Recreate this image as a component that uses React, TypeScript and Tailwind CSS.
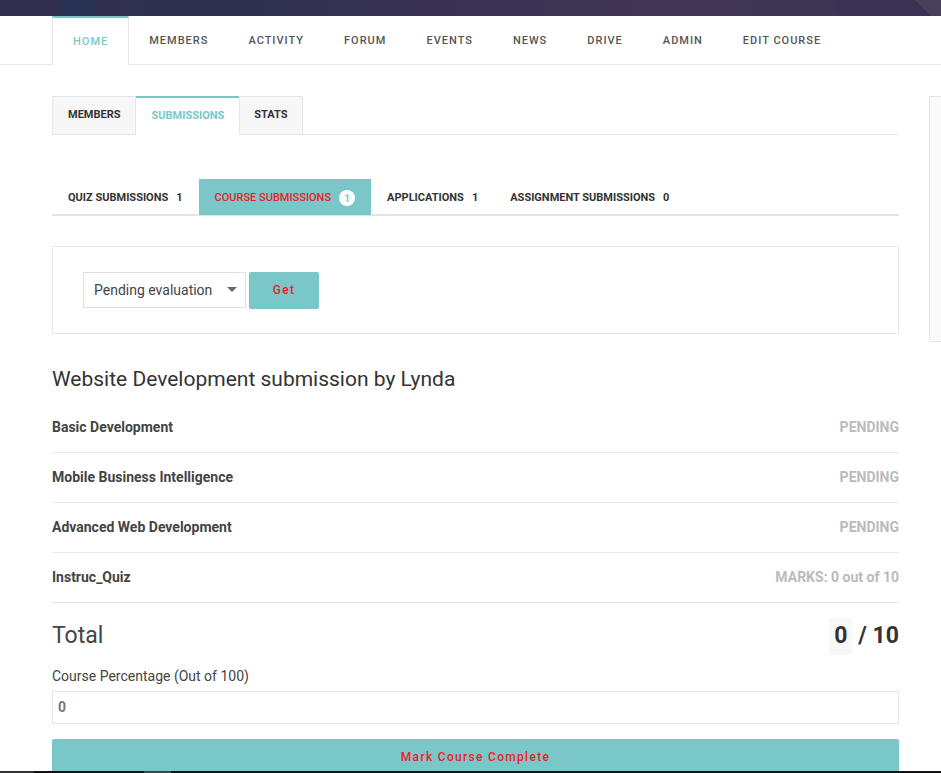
import React from "react";

function Row({ left, right }: { left: string; right: string }) {
  return (
    <div className="flex h-[50px] items-center justify-between border-b border-[#e8e8e8]">
      <span className="text-[14px] font-bold text-[#444]">{left}</span>
      <span className="text-[14px] font-bold text-[#bbbbbb]">{right}</span>
    </div>
  );
}

export default function App() {
  const nav = ["MEMBERS", "ACTIVITY", "FORUM", "EVENTS", "NEWS", "DRIVE", "ADMIN", "EDIT COURSE"];
  return (
    <div
      className="min-h-[773px] w-[941px] overflow-hidden bg-white"
      style={{ fontFamily: "Roboto, 'Noto Sans', sans-serif" }}
    >
      {/* dark header band */}
      <div className="relative h-[16px] overflow-hidden bg-[linear-gradient(90deg,#33304f_0%,#2f3151_25%,#383152_45%,#413554_70%,#3d3553_90%,#3e3654_100%)]">
        <div className="absolute left-[55px] top-0 h-[16px] w-[45px] bg-[#283456] opacity-80 [clip-path:polygon(0_0,100%_0,80%_100%,30%_100%)]" />
        <div className="absolute left-[830px] top-0 h-[16px] w-[111px] bg-[#3a3153] [clip-path:polygon(0_0,100%_0,100%_100%,10%_100%)]" />
        <div className="absolute left-[915px] top-0 h-[16px] w-[26px] bg-[#464159] [clip-path:polygon(0_0,100%_0,100%_100%,60%_100%)]" />
      </div>

      {/* main nav */}
      <div className="flex h-[49px] border-b border-[#e6e6e6] pl-[52px]">
        <div className="-mb-px flex h-[49px] items-center border-x border-t-2 border-x-[#e6e6e6] border-t-[#79c7c8] bg-white px-[20px] pt-[1px] text-[11px] font-medium tracking-[1px] text-[#79c7c8]">
          HOME
        </div>
        {nav.map((n) => (
          <div
            key={n}
            className="flex items-center px-[20px] pt-[3px] text-[11px] font-medium tracking-[1px] text-[#555]"
          >
            {n}
          </div>
        ))}
      </div>

      <div className="flex gap-[30px] pl-[52px] pt-[31px]">
        <div className="w-[847px] shrink-0">
          {/* sub tabs */}
          <div className="flex h-[39px] border-b border-[#e6e6e6]">
            <div className="-mb-px flex items-center border border-[#e6e6e6] bg-[#f7f7f7] px-[15px] text-[11px] font-bold text-[#333]">
              MEMBERS
            </div>
            <div className="-mb-px flex items-center border-t-2 border-[#79c7c8] bg-white px-[15px] text-[11px] font-bold text-[#79c7c8]">
              SUBMISSIONS
            </div>
            <div className="-mb-px flex items-center border border-[#e6e6e6] bg-[#f7f7f7] px-[14px] text-[11px] font-bold text-[#333]">
              STATS
            </div>
          </div>

          {/* submission tabs */}
          <div className="mt-[44px] flex h-[37px] border-b-2 border-[#e3e3e3]">
            <div className="flex items-center gap-[8px] px-[16px] pt-[3px] text-[11px] font-bold text-[#333]">
              <span>QUIZ SUBMISSIONS</span>
              <span>1</span>
            </div>
            <div className="-mb-[1px] flex items-center gap-[8px] bg-[#79c7c8] px-[16px] pt-[2px] text-[11px] font-medium text-[#ee1c25]">
              <span>COURSE SUBMISSIONS</span>
              <span className="flex h-[16px] w-[16px] items-center justify-center rounded-full bg-white text-[10px] font-bold text-[#79c7c8]">
                1
              </span>
            </div>
            <div className="flex items-center gap-[8px] px-[16px] pt-[3px] text-[11px] font-bold text-[#333]">
              <span>APPLICATIONS</span>
              <span>1</span>
            </div>
            <div className="flex items-center gap-[8px] px-[16px] pt-[3px] text-[11px] font-bold text-[#333]">
              <span>ASSIGNMENT SUBMISSIONS</span>
              <span>0</span>
            </div>
          </div>

          {/* filter box */}
          <div className="mt-[30px] flex h-[88px] items-center border border-[#e8e8e8] pl-[30px]">
            <div className="flex h-[36px] w-[163px] items-center justify-between border border-[#e0e0e0] bg-white pl-[10px] pr-[8px] text-[14px] text-[#444]">
              <span>Pending evaluation</span>
              <svg width="10" height="6" viewBox="0 0 10 6">
                <path d="M0 0 L10 0 L5 5 Z" fill="#666" />
              </svg>
            </div>
            <button className="ml-[3px] h-[37px] w-[70px] rounded-[2px] bg-[#79c7c8] text-[12px] font-medium tracking-[1.3px] text-[#ee1c25]">
              Get
            </button>
          </div>

          {/* title */}
          <div className="mt-[30px] text-[21px] leading-[30px] text-[#333]">
            Website Development submission by Lynda
          </div>

          <div className="mt-[9px]">
            <Row left="Basic Development" right="PENDING" />
            <Row left="Mobile Business Intelligence" right="PENDING" />
            <Row left="Advanced Web Development" right="PENDING" />
            <Row left="Instruc_Quiz" right="MARKS: 0 out of 10" />
          </div>

          {/* total */}
          <div className="mt-[15px] flex h-[37px] items-center justify-between">
            <span className="text-[23px] text-[#444]">Total</span>
            <span className="flex h-[37px] items-center text-[23px] font-bold text-[#333]">
              <span className="flex h-[37px] items-center bg-[#f8f8f8] px-[5px]">0</span>
              <span className="ml-[6px]">/ 10</span>
            </span>
          </div>

          <div className="mt-[11px] text-[14px] leading-[20px] text-[#444]">
            Course Percentage (Out of 100)
          </div>
          <div className="mt-[5px] flex h-[33px] items-center border border-[#e6e6e6] px-[5px] text-[14px] font-bold text-[#777]">
            0
          </div>
          <button className="mt-[15px] flex h-[32px] w-full items-center justify-center rounded-t-[2px] bg-[#79c7c8] pt-[3px] text-[12px] font-medium tracking-[1.3px] text-[#ee1c25]">
            Mark Course Complete
          </button>
        </div>

        {/* right sidebar */}
        <div className="h-[246px] w-[250px] shrink-0 border border-[#e6e6e6] bg-[#fafafa]" />
      </div>

      {/* bottom dark strip */}
      <div className="flex h-[3px]">
        <div className="w-[34px] bg-[#333]" />
        <div className="w-[110px] bg-[#111]" />
        <div className="w-[27px] bg-[#444]" />
        <div className="flex-1 bg-[#111]" />
      </div>
    </div>
  );
}
